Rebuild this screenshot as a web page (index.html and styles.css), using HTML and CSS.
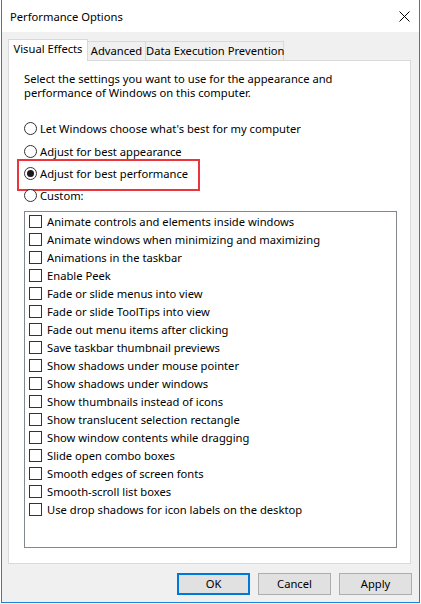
FILE: index.html
```html
<!DOCTYPE html>
<html>
<head>
<meta charset="utf-8">
<title>Performance Options</title>
<link rel="stylesheet" href="styles.css">
</head>
<body>
<div class="window">
  <div class="titlebar">
    <span class="title">Performance Options</span>
    <svg class="close" width="11" height="11" viewBox="0 0 11 11"><path d="M0.5 0.5 L10.5 10.5 M10.5 0.5 L0.5 10.5" stroke="#000" stroke-width="1" fill="none"/></svg>
  </div>
  <div class="content">
    <div class="tabs">
      <div class="tab active">Visual Effects</div>
      <div class="tab t-adv">Advanced</div>
      <div class="tab t-dep">Data Execution Prevention</div>
    </div>
    <div class="panel">
      <p class="intro">Select the settings you want to use for the appearance and<br>performance of Windows on this computer.</p>
      <div class="radios">
        <div class="radio"><span class="rb"></span>Let Windows choose what's best for my computer</div>
        <div class="radio second"><span class="rb"></span>Adjust for best appearance</div>
        <div class="radio hl"><span class="rb on"></span>Adjust for best performance</div>
        <div class="radio"><span class="rb"></span>Custom:</div>
      </div>
      <div class="list">
        <div class="row"><span class="cb"></span>Animate controls and elements inside windows</div>
        <div class="row"><span class="cb"></span>Animate windows when minimizing and maximizing</div>
        <div class="row"><span class="cb"></span>Animations in the taskbar</div>
        <div class="row"><span class="cb"></span>Enable Peek</div>
        <div class="row"><span class="cb"></span>Fade or slide menus into view</div>
        <div class="row"><span class="cb"></span>Fade or slide ToolTips into view</div>
        <div class="row"><span class="cb"></span>Fade out menu items after clicking</div>
        <div class="row"><span class="cb"></span>Save taskbar thumbnail previews</div>
        <div class="row"><span class="cb"></span>Show shadows under mouse pointer</div>
        <div class="row"><span class="cb"></span>Show shadows under windows</div>
        <div class="row"><span class="cb"></span>Show thumbnails instead of icons</div>
        <div class="row"><span class="cb"></span>Show translucent selection rectangle</div>
        <div class="row"><span class="cb"></span>Show window contents while dragging</div>
        <div class="row"><span class="cb"></span>Slide open combo boxes</div>
        <div class="row"><span class="cb"></span>Smooth edges of screen fonts</div>
        <div class="row"><span class="cb"></span>Smooth-scroll list boxes</div>
        <div class="row"><span class="cb"></span>Use drop shadows for icon labels on the desktop</div>
      </div>
    </div>
    <div class="buttons">
      <div class="btn default">OK</div>
      <div class="btn">Cancel</div>
      <div class="btn">Apply</div>
    </div>
  </div>
</div>
</body>
</html>
```
FILE: styles.css
```css
* { box-sizing: border-box; }
html, body { margin: 0; padding: 0; background: #fff; }
body {
  font-family: "Noto Sans", "Segoe UI", sans-serif;
  font-size: 11.2px;
  color: #000;
}
.window {
  margin-left: 1px;
  width: 419px;
  height: 603px;
  border: 1px solid #1883d7;
  border-top: none;
  background: #f0f0f0;
  display: flex;
  flex-direction: column;
}
.titlebar {
  height: 32px;
  flex: none;
  background: #fff;
  display: flex;
  align-items: center;
  justify-content: space-between;
  padding: 0 9px 0 8px;
}
.title { line-height: 16px; padding-top: 1px; }
.close { display: block; }
.content { padding: 7px 8px 0 6px; }
.tabs {
  display: flex;
  align-items: flex-end;
  height: 21px;
}
.tab {
  height: 19px;
  border: 1px solid #d9d9d9;
  border-bottom: none;
  border-left: none;
  background: #f0f0f0;
  line-height: 18px;
  text-align: center;
  white-space: nowrap;
}
.tab.active {
  width: 80px;
  height: 22px;
  margin-bottom: -1px;
  border-left: 1px solid #d9d9d9;
  background: #fff;
  position: relative;
  z-index: 1;
}
.t-adv { width: 58px; }
.t-dep { width: 138px; }
.panel {
  width: 403px;
  height: 504px;
  background: #fff;
  border: 1px solid #d9d9d9;
  padding: 11px 0 0 15px;
}
.intro { margin: 0; line-height: 14px; }
.radios { margin-top: 17px; }
.radio {
  height: 22px;
  display: flex;
  align-items: center;
  white-space: nowrap;
}
.radio.second { margin-top: 1px; }
.radio.hl { position: relative; }
.radio.hl::before {
  content: "";
  position: absolute;
  left: -7px;
  top: -3px;
  width: 179px;
  height: 28px;
  border: 2px solid #e9353b;
}
.rb {
  width: 13px;
  height: 13px;
  border: 1px solid #333;
  border-radius: 50%;
  background: #fff;
  margin-right: 3px;
  flex: none;
  position: relative;
}
.rb.on::after {
  content: "";
  position: absolute;
  left: 2px;
  top: 2px;
  width: 7px;
  height: 7px;
  border-radius: 50%;
  background: #1a1a1a;
}
.list {
  margin-top: 5px;
  width: 373px;
  height: 337px;
  border: 1px solid #828790;
  padding: 0 0 0 4px;
}
.row {
  height: 18px;
  display: flex;
  align-items: center;
  white-space: nowrap;
}
.cb {
  width: 13px;
  height: 13px;
  border: 1px solid #333;
  background: #fff;
  margin-right: 5px;
  flex: none;
}
.buttons {
  display: flex;
  justify-content: flex-end;
  gap: 8px;
  margin-top: 9px;
  margin-right: -1px;
}
.btn {
  width: 73px;
  height: 22px;
  background: #e1e1e1;
  border: 1px solid #adadad;
  display: flex;
  align-items: center;
  justify-content: center;
  padding-bottom: 1px;
}
.btn.default { border: 2px solid #0078d7; }
```
